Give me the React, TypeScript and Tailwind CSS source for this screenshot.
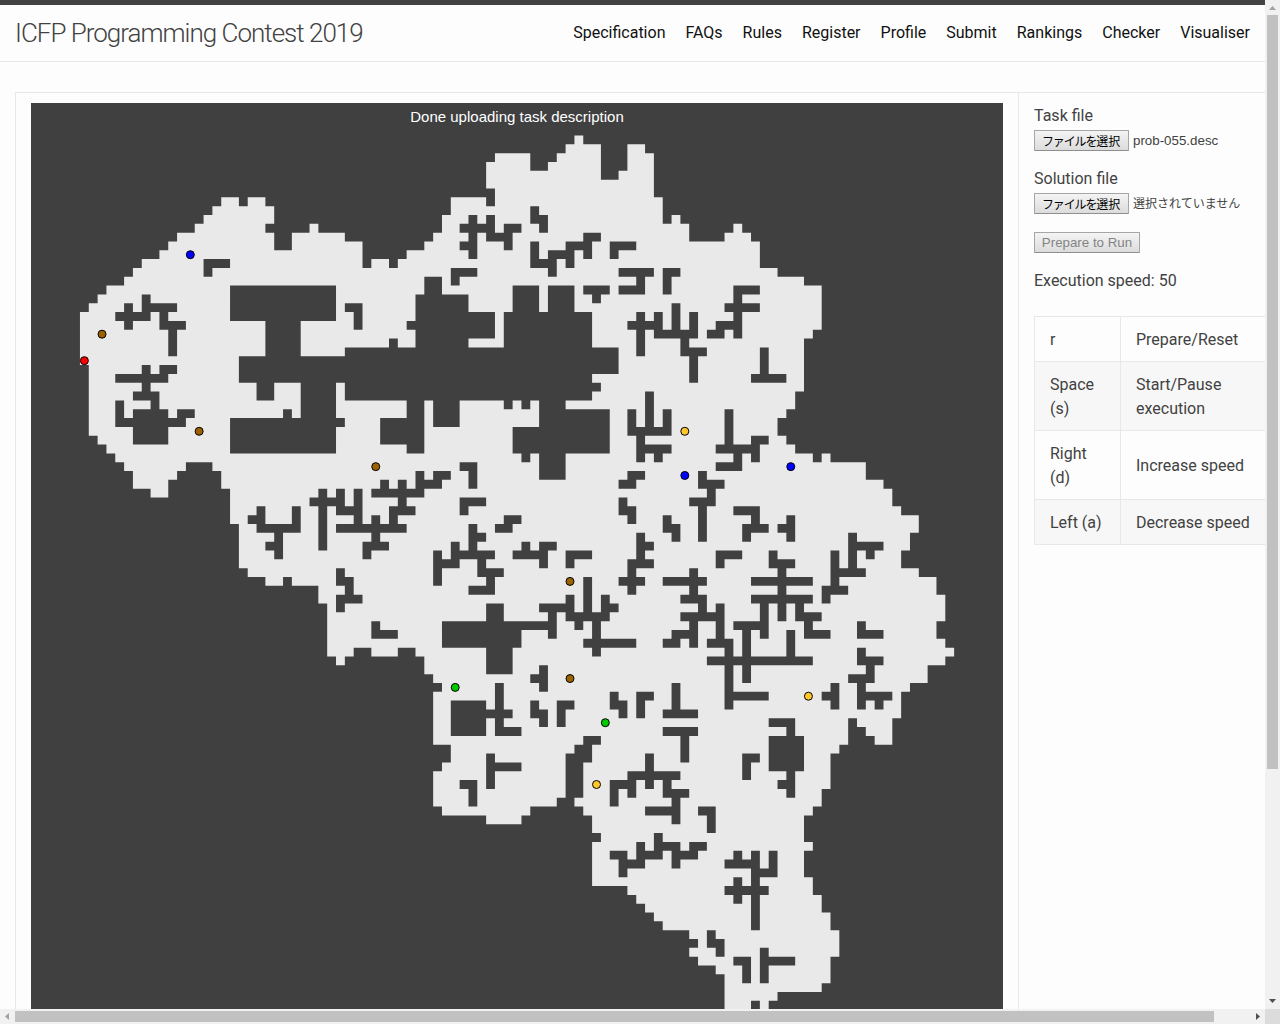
import React, { type ReactNode } from "react";

const NAV = ["Specification", "FAQs", "Rules", "Register", "Profile", "Submit", "Rankings", "Checker", "Visualiser"];

const KEYS = [
  { key: ["r"], action: ["Prepare/Reset"] },
  { key: ["Space", "(s)"], action: ["Start/Pause", "execution"] },
  { key: ["Right", "(d)"], action: ["Increase speed"] },
  { key: ["Left (a)"], action: ["Decrease speed"] },
];

// Outline of the mine in cell units.
const OUTLINE =
  "M0 20H1V19H2V18H3V17H5V16H6V15H7V14H9V13H10V12H11V11H13V10H14V9H15V8H16V7H18V8H19V7H21V8H22V10H21V11H22V13H24V11H26V10H27V11H30V12H32V15H33V14H35V15H36V14H37V13H39V12H40V11H41V9H42V7H46V8H47V6H46V3H47V2H51V4H53V3H54V2H55V1H56V0H57V1H59V5H61V4H62V1H64V2H65V7H66V10H67V9H68V10H69V12H73V11H74V10H75V11H76V12H77V15H79V16H82V17H84V22H83V23H82V29H81V31H80V32H79V34H80V35H81V36H83V37H84V36H85V37H89V39H91V40H92V42H93V43H95V45H94V47H93V49H95V50H97V52H98V55H97V57H98V58H99V59H98V60H96V62H94V63H93V66H92V69H90V68H89V67H88V66H87V69H86V70H85V74H84V76H83V77H82V80H83V81H82V84H83V86H84V88H85V90H86V93H85V96H84V97H79V98H78V99H73V95H72V94H70V93H69V92H70V91H69V90H66V89H65V88H64V87H63V86H62V85H58V80H59V79H58V77H57V76H56V75H57V71H58V69H59V68H57V69H56V70H55V75H54V76H51V77H50V78H46V77H41V76H40V72H41V71H42V69H40V63H41V62H40V61H39V59H38V58H36V59H33V58H31V59H30V60H29V59H28V53H27V51H24V50H23V51H21V50H19V49H18V44H17V40H16V38H15V37H12V38H11V39H10V41H8V40H6V38H5V37H4V36H3V35H2V34H1V26H0Z";

// Obstacles: x,y,width,height in cell units.
const OBSTACLES = `
14,14,3,1 14,15,1,1 17,17,12,4 21,21,4,4 18,25,12,3 20,28,2,2 25,28,4,4 17,32,12,4 29,32,1,1 23,31,1,1
30,24,31,3 30,27,28,3 58,28,1,1 30,19,2,1 31,19,1,3 7,18,1,2 7,19,4,1 5,19,1,3 4,20,4,1 9,19,1,3 9,21,3,1 10,21,1,4
7,26,1,4 9,26,2,1 9,26,1,2 4,27,6,1 6,29,3,1 8,29,1,3 4,30,1,3 6,31,4,4 4,32,8,1 11,31,2,1 11,31,1,2
26,41,4,1 27,40,1,7 29,40,1,3 29,42,3,1 31,40,1,5 29,44,8,1 33,43,1,4 33,46,2,1 32,46,1,2 32,46,3,1 33,40,6,1
19,43,2,1 20,42,1,3 20,44,5,1 24,42,1,3 22,44,1,4 21,46,1,1 21,46,2,1 29,49,1,2 29,50,2,1 30,50,1,3 29,52,3,1 29,52,1,2
33,55,1,2 33,56,3,1 51,8,1,2 51,9,2,1 52,9,1,2 44,9,1,5 43,10,4,1 46,9,1,3 46,11,3,1 48,10,2,1 48,10,1,3 43,12,2,1
42,15,3,1 42,15,1,2 51,12,1,3 51,14,3,1 53,13,1,3 53,13,3,1 55,12,1,3 55,12,3,1 57,11,2,1 57,11,1,3 60,12,3,1 60,12,1,2
61,15,4,1 63,15,1,3 61,17,3,1 66,15,1,3 66,15,2,1 57,17,3,1 58,17,1,2
39,16,2,3 38,18,6,7 44,20,3,3 43,20,4,3 37,21,2,1 35,23,1,2 49,17,3,4 53,17,3,4 48,20,10,5
63,20,1,5 62,21,4,1 65,20,1,3 65,22,5,1 67,19,1,4 69,20,1,3 68,22,1,3 68,24,3,1 69,24,1,4
74,17,3,1 74,17,1,6 73,19,4,1 72,21,3,1 72,21,1,2 71,22,2,1 77,24,1,4 76,27,4,1
37,29,2,7 34,32,5,3 40,29,3,4 48,29,1,2 50,29,1,2 52,29,3,10 52,31,8,5 49,33,11,3 50,35,1,2
64,29,1,5 62,31,1,3 62,33,5,1 66,31,1,3 63,33,1,4 63,35,4,1 65,35,1,2
73,31,1,5 72,35,5,1 76,34,2,1 76,34,1,3 74,35,1,3 72,37,3,1 70,38,1,2 70,39,3,1 71,39,1,3 69,41,3,1 70,41,1,5
66,43,1,2 66,44,2,1 67,44,1,2 74,42,3,1 76,42,1,3 75,44,3,1 75,44,1,2 80,43,1,3 79,44,2,1 72,47,3,1 72,47,1,2
78,47,1,2 78,48,3,1 79,48,1,7 76,50,7,1 76,52,7,1 77,52,1,5 74,55,4,1 75,55,1,7 81,52,1,3 81,54,3,1 82,54,1,3 82,56,3,1 80,56,1,4 71,59,12,1
69,49,1,4 66,50,5,1 68,52,3,1 70,52,1,3 68,54,5,1 69,54,1,4 67,56,3,1 67,56,1,2 66,57,2,1 72,53,1,5 71,57,3,1 73,57,1,8 73,63,5,1
87,45,1,5 87,46,4,1 89,46,1,2 85,47,1,5 85,49,4,1 84,51,3,1 84,51,1,2 88,55,1,2 88,56,3,1
88,58,1,2 88,59,3,1 89,59,1,3 87,61,3,1 88,61,1,4 88,63,4,1 90,63,1,2 85,62,1,3 84,63,2,1 67,62,1,4 66,65,4,1
78,66,3,1 80,66,1,3 78,68,4,4 80,71,1,4 79,73,2,1 75,70,2,1 75,70,1,3 70,76,2,1 71,76,1,3
74,81,1,2 73,82,4,1 76,81,1,9 76,83,3,1 78,81,1,3 74,84,1,3 73,85,5,1 71,90,1,2 71,91,2,1 72,91,1,2
74,93,2,1 75,93,1,3 77,92,1,4 77,93,4,1 76,98,1,1
38,38,1,3 38,39,3,1 40,38,2,1 40,38,1,2 34,39,1,2 36,39,1,4 35,42,3,1 35,42,1,3 43,37,2,1 44,37,1,3 43,41,3,1 43,41,1,2
47,44,2,1 48,43,2,1 48,43,1,2 44,44,1,4 44,45,2,1 42,47,5,1 42,46,1,3 40,47,1,4 40,48,3,1 45,47,1,3 45,49,3,1 46,49,1,3 44,51,3,1
49,47,4,1 50,46,1,2 52,46,2,1 52,46,1,3 55,47,3,1 55,47,1,2 62,38,2,1 62,38,1,2 61,39,2,1 61,41,1,2 61,42,2,1 62,42,1,2
63,45,1,4 63,46,2,1 62,48,3,1 62,48,1,4 61,50,3,1 57,50,1,5 52,53,4,1 55,52,1,3 55,54,5,1 59,52,1,3 59,53,2,1 56,54,1,2 58,54,1,5 57,57,6,1
53,53,1,4 41,55,13,1 41,55,9,3 46,53,2,3 46,57,3,4 52,60,1,3 51,61,2,1 42,64,4,4 45,65,4,1 47,62,1,6 47,67,3,1 51,64,1,2 51,65,2,1 52,65,1,2
54,64,2,1 54,64,1,3 60,63,1,2 60,64,2,1 61,64,1,2 63,63,2,1 63,63,1,3 66,67,4,1 68,67,1,4
46,70,1,4 46,71,4,1 43,73,2,1 44,73,1,3 64,70,1,4 62,72,6,1 62,72,1,3 60,73,3,1 60,73,1,3 66,72,1,3 66,74,3,1 67,74,1,4 64,76,4,1
65,79,1,3 65,80,3,1 63,81,3,1 63,80,1,3 61,82,3,1 60,81,2,1 61,81,1,3 67,80,1,3 67,81,3,1 69,80,2,1 69,80,1,2`
  .trim()
  .split(/\s+/)
  .map((r) => r.split(",").map(Number))
  .map(([x, y, w, h]) => `M${x} ${y}h${w}v${h}h${-w}z`)
  .join("");

const BOOSTERS: [number, number, string][] = [
  [0, 25, "#ff0000"],
  [2, 22, "#9a6200"],
  [12, 13, "#0000ff"],
  [13, 33, "#9a6200"],
  [33, 37, "#9a6200"],
  [68, 33, "#ffc72e"],
  [68, 38, "#0000ff"],
  [80, 37, "#0000ff"],
  [55, 50, "#9a6200"],
  [55, 61, "#9a6200"],
  [42, 62, "#00c800"],
  [59, 66, "#00c800"],
  [82, 63, "#ffc72e"],
  [58, 73, "#ffc72e"],
];

const CELL = 8.83;

function MineMap() {
  return (
    <svg className="block h-[972px] w-[972px]" viewBox="0 0 972 972">
      <g transform="translate(48.95 32.5)">
        <g transform={`scale(${CELL})`}>
          <path d={OUTLINE} fill="#e9e9e9" />
          <path d={OBSTACLES} fill="#404040" />
        </g>
        {BOOSTERS.map(([x, y, fill]) => (
          <circle key={`${x}-${y}`} cx={(x + 0.5) * CELL} cy={(y + 0.5) * CELL} r={4} fill={fill} stroke="#000" strokeWidth={1} />
        ))}
      </g>
    </svg>
  );
}

const BUTTON =
  "box-border h-[21px] shrink-0 rounded-[1px] border border-[#a6a6a6] border-b-[#8f8f8f] bg-linear-to-b from-[#f4f4f4] to-[#dcdcdc] leading-[19px] whitespace-nowrap";

function FileInput({ label, children }: { label: string; children: ReactNode }) {
  return (
    <div className="mb-[15px] h-12">
      <div className="h-6">{label}</div>
      <div className="flex h-6 items-center gap-1 pt-px font-['Liberation_Sans','Noto_Sans_CJK_JP',sans-serif] whitespace-nowrap">
        <button className={`${BUTTON} w-[95px] pt-[2px] pl-[7px] text-left text-[12px] text-black`}>
          <span className="tracking-[-1.15px]">ファイルを</span>選択
        </button>
        {children}
      </div>
    </div>
  );
}

export default function App() {
  return (
    <div className="grid h-[1024px] w-[1280px] grid-cols-[1265px_15px] grid-rows-[1009px_15px] overflow-hidden bg-[#fdfdfd] font-[Roboto,sans-serif] text-base leading-6 text-[#424242]">
      <div className="overflow-hidden">
        <header className="flex h-[62px] items-center justify-between border-t-[5px] border-b border-t-[#424242] border-b-[#e8e8e8] px-[15px]">
          <a className="text-[26px] font-light tracking-[-1px]">ICFP Programming Contest 2019</a>
          <nav className="flex gap-5 text-[#111]">
            {NAV.map((n) => (
              <a key={n}>{n}</a>
            ))}
          </nav>
        </header>
        <main className="mt-[30px] ml-[15px] flex w-[1300px] border border-[#e8e8e8]">
          <section className="w-[1003px] shrink-0 border-r border-[#e8e8e8] px-[15px] py-[10px]">
            <div className="relative bg-[#404040]">
              <MineMap />
              <p className="absolute inset-x-0 top-1 text-center font-['Liberation_Sans',sans-serif] text-[15px] leading-5 text-white">
                Done uploading task description
              </p>
            </div>
          </section>
          <aside className="w-[270px] shrink-0 pt-[11px] pl-[15px]">
            <FileInput label="Task file">
              <span className="text-[13.333px] leading-5">prob-055.desc</span>
            </FileInput>
            <FileInput label="Solution file">
              <span className="text-[12px] leading-5">選択されていません</span>
            </FileInput>
            <div className="h-[39px] pt-[2px]">
              <button disabled className={`${BUTTON} block w-[106px] text-center font-['Liberation_Sans',sans-serif] text-[13.333px] text-[#848484]`}>
                Prepare to Run
              </button>
            </div>
            <p className="mb-[23px]">Execution speed: 50</p>
            <table className="w-[250px] table-fixed border-collapse">
              <tbody>
                {KEYS.map((row) => (
                  <tr key={row.key[0]} className="even:bg-[#f7f7f7]">
                    <td className="w-[86px] border border-[#e8e8e8] px-[15px] pt-[11px] pb-[9px]">
                      {row.key.map((l) => (
                        <div key={l}>{l}</div>
                      ))}
                    </td>
                    <td className="border border-[#e8e8e8] px-[15px] pt-[11px] pb-[9px] whitespace-nowrap">
                      {row.action.map((l) => (
                        <div key={l}>{l}</div>
                      ))}
                    </td>
                  </tr>
                ))}
              </tbody>
            </table>
          </aside>
        </main>
      </div>

      <div className="flex flex-col items-center justify-between bg-[#f1f1f1]">
        <svg className="h-[15px] w-[15px] shrink-0" viewBox="0 0 15 15">
          <path d="M4 10L7.5 6L11 10Z" fill="#a3a3a3" />
        </svg>
        <div className="h-[754px] w-[11px] bg-[#c1c1c1]" />
        <div className="flex-1" />
        <svg className="h-[15px] w-[15px] shrink-0" viewBox="0 0 15 15">
          <path d="M4 5H11L7.5 9Z" fill="#505050" />
        </svg>
      </div>

      <div className="flex items-center bg-[#f1f1f1]">
        <svg className="h-[15px] w-[15px] shrink-0" viewBox="0 0 15 15">
          <path d="M9 4V11L5 7.5Z" fill="#a3a3a3" />
        </svg>
        <div className="h-[11px] w-[1199px] bg-[#c1c1c1]" />
        <div className="flex-1" />
        <svg className="h-[15px] w-[15px] shrink-0" viewBox="0 0 15 15">
          <path d="M6 4V11L10 7.5Z" fill="#505050" />
        </svg>
      </div>
      <div className="bg-[#dcdcdc]" />
    </div>
  );
}
